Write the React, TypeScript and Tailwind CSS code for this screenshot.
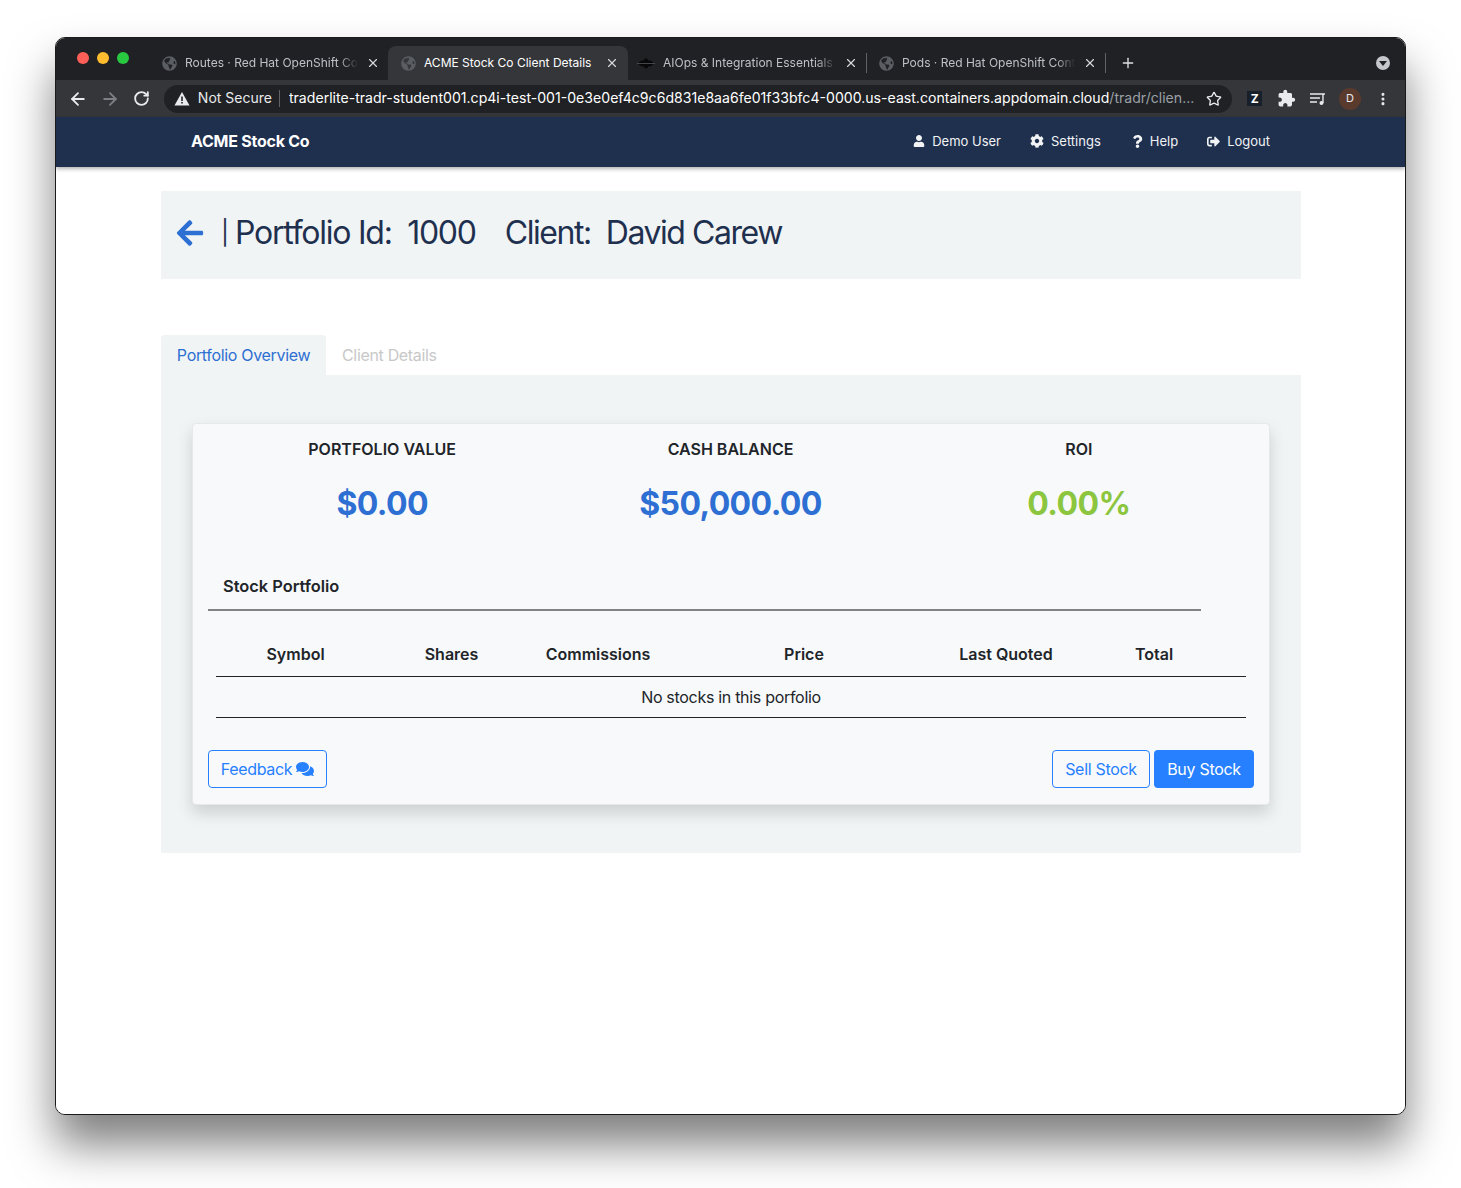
import { ArrowLeft, ArrowRight, MoreVertical, Plus, RotateCw, Star, X } from 'lucide-react';
import { FaArrowLeft, FaCog, FaComments, FaGlobeAmericas, FaQuestion, FaSignOutAlt, FaUser } from 'react-icons/fa';
import { MdExtension } from 'react-icons/md';

const tabs = [
  { title: 'Routes · Red Hat OpenShift Console', active: false, box: 'w-[227px] pl-[1px] pr-[8px]', fade: true, sep: false },
  { title: 'ACME Stock Co Client Details', active: true, box: 'w-[240px] pl-[13px] pr-[9px]', fade: false, sep: false },
  { title: 'AIOps & Integration Essentials', active: false, box: 'w-[239px] pl-[9px]', fade: true, sep: true, ai: true },
  { title: 'Pods · Red Hat OpenShift Container', active: false, box: 'w-[239px] pl-[12px]', fade: true, sep: true },
];

const columns = [
  { label: 'Symbol', width: 'w-[159px]' },
  { label: 'Shares', width: 'w-[153px]' },
  { label: 'Commissions', width: 'w-[140px]' },
  { label: 'Price', width: 'w-[272px]' },
  { label: 'Last Quoted', width: 'w-[132px]' },
  { label: 'Total', width: 'w-[164px]' },
];

const stats = [
  { label: 'PORTFOLIO VALUE', value: '$0.00', color: 'text-[#2d6fd2]' },
  { label: 'CASH BALANCE', value: '$50,000.00', color: 'text-[#2d6fd2]' },
  { label: 'ROI', value: '0.00%', color: 'text-[#8cc63f]' },
];

type TabProps = { title: string; active: boolean; box: string; fade: boolean; sep: boolean; ai?: boolean };

function Tab({ title, active, box, fade, sep, ai }: TabProps) {
  return (
    <div className={`${box} h-[34px] flex items-center rounded-t-[8px] ${active ? 'bg-[#35363a] text-white' : 'text-[#bdc1c6]'}`}>
      {ai ? (
        <svg width="18" height="12" viewBox="0 0 18 12" className="mr-[8px] shrink-0">
          <path d="M1 6.5C3 3.5 6 3 8 4v5C6 10 3 9.5 1 6.5zM17 6.5C15 3.5 12 3 10 4v5c2 1 5 .5 7-2.500z" fill="#08080a" />
          <ellipse cx="9" cy="6.5" rx="2.500" ry="5" fill="#08080a" />
          <path d="M0 6.500h18" stroke="#55575b" strokeWidth="0.8" />
        </svg>
      ) : (
        <FaGlobeAmericas className="mr-[8px] shrink-0 text-[15px] text-[#5a5d62]" />
      )}
      <span
        className={`flex-1 overflow-hidden whitespace-nowrap text-[12px] leading-[16px] ${
          fade ? '[mask-image:linear-gradient(to_right,black_88%,transparent_99%)]' : ''
        }`}
      >
        {title}
      </span>
      <X size={14} strokeWidth={2} className="ml-[6px] shrink-0 text-[#d5d7da]" />
      {sep && <span className="ml-[8px] w-px h-[20px] bg-[#5f6368] shrink-0" />}
    </div>
  );
}

export default function App() {
  return (
    <div className="w-[1461px] h-[1188px] bg-white pt-[37px] pl-[55px] font-['Inter',sans-serif] overflow-hidden">
      <div className="w-[1351px] h-[1078px] rounded-[10px] bg-white border border-[#1a1a1a] overflow-hidden shadow-[0_30px_45px_rgba(0,0,0,0.5)] flex flex-col">
        {/* tab strip */}
        <div className="h-[42px] bg-[#202124] flex items-end relative">
          <div className="flex gap-[8px] w-[105px] pl-[21px] pb-[16px]">
            <span className="w-[12px] h-[12px] rounded-full bg-[#ff5f57]" />
            <span className="w-[12px] h-[12px] rounded-full bg-[#febc2e]" />
            <span className="w-[12px] h-[12px] rounded-full bg-[#28c840]" />
          </div>
          {tabs.map((t) => (
            <Tab key={t.title} {...t} />
          ))}
          <div className="h-[34px] flex items-center pl-[14px]">
            <Plus size={16} strokeWidth={2} className="text-[#dfe1e5]" />
          </div>
          <div className="absolute right-[15px] top-[18px] w-[14px] h-[14px] rounded-full bg-[#c4c7cb] flex items-center justify-center">
            <span className="w-0 h-0 border-l-[4px] border-r-[4px] border-t-[5px] border-l-transparent border-r-transparent border-t-[#202124]" />
          </div>
        </div>

        {/* address bar */}
        <div className="h-[37px] bg-[#35363a] flex items-center pl-[12px] pr-[14px]">
          <ArrowLeft size={20} strokeWidth={2.2} className="text-[#e8eaed]" />
          <ArrowRight size={20} strokeWidth={2.2} className="ml-[12px] text-[#7c7f84]" />
          <RotateCw size={17} strokeWidth={2.6} className="ml-[13px] text-[#e8eaed]" />
          <div className="ml-[14px] w-[1071px] h-[28px] rounded-full bg-[#202124] flex items-center pl-[10px] pr-[10px]">
            <svg width="16" height="15" viewBox="0 0 16 15" className="shrink-0">
              <path d="M8 1l7.500 13.500H.5z" fill="#e8eaed" />
              <path d="M7.200 5.500h1.600v4.500H7.200zM7.200 11h1.600v1.600H7.200z" fill="#202124" />
            </svg>
            <span className="ml-[8px] pb-[2px] text-[14px] text-[#e8eaed] whitespace-nowrap">Not Secure</span>
            <span className="ml-[7px] mr-[9px] w-px h-[17px] bg-[#5f6368]" />
            <span className="flex-1 pb-[2px] whitespace-nowrap overflow-hidden text-[14.1px] text-white">
              traderlite-tradr-student001.cp4i-test-001-0e3e0ef4c9c6d831e8aa6fe01f33bfc4-0000.us-east.containers.appdomain.cloud
              <span className="text-[#9aa0a6]">/tradr/clien...</span>
            </span>
            <Star size={16} className="ml-[10px] shrink-0 text-[#e8eaed]" />
          </div>
          <div className="ml-[15px] w-[15px] h-[15px] bg-[#17202a] text-white text-[12px] font-bold flex items-center justify-center">Z</div>
          <MdExtension className="ml-[15px] text-[19px] text-[#e8eaed]" />
          <svg width="16" height="14" viewBox="0 0 16 14" className="ml-[14px] text-[#e8eaed]">
            <path d="M0 2h15M0 6h10M0 10h7" stroke="currentColor" strokeWidth="1.400" />
            <path d="M13 2v9" stroke="currentColor" strokeWidth="1.400" />
            <circle cx="11.500" cy="11" r="2" fill="currentColor" />
          </svg>
          <div className="ml-[13px] w-[22px] h-[22px] rounded-full bg-[#5b3a2e] text-[#e8eaed] text-[11px] flex items-center justify-center">D</div>
          <MoreVertical size={16} strokeWidth={2.6} className="ml-[14px] text-[#e8eaed]" />
        </div>

        {/* app navbar */}
        <nav className="h-[50px] bg-[#1f304f] flex items-center pl-[135px] pr-[135px] pb-[2px] text-white shadow-[0_2px_4px_rgba(0,0,0,0.3)] relative">
          <span className="flex-1 text-[16px] leading-[20px] font-bold tracking-[-0.25px]">ACME Stock Co</span>
          <div className="flex items-center text-[13px] leading-[20px] text-[#f1f3f5]">
            <FaUser className="text-[12px] mr-[7px]" />
            <span>Demo User</span>
            <FaCog className="text-[14px] ml-[29px] mr-[7px]" />
            <span>Settings</span>
            <FaQuestion className="text-[13px] ml-[30px] mr-[6px]" />
            <span>Help</span>
            <FaSignOutAlt className="text-[13px] ml-[29px] mr-[7px]" />
            <span>Logout</span>
          </div>
        </nav>

        {/* page */}
        <main className="flex-1 pl-[105px] pr-[104px] pt-[24px] bg-white">
          <header className="h-[88px] bg-[#f0f4f5] flex items-center pl-[14px] pb-[4px] text-[#1f304f] text-[32px] tracking-[-1.25px] whitespace-pre">
            <FaArrowLeft className="text-[30px] text-[#2d6fd2] mr-[16px]" />
            <span className="text-[24px] w-[14px]">|</span>
            <span>Portfolio Id:  1000</span>
            <span className="ml-[29px] tracking-[-1.45px]">Client:  David Carew</span>
          </header>

          <div className="mt-[56px] flex text-[16px] tracking-[-0.33px]">
            <div className="h-[40px] w-[165px] bg-[#f0f4f5] rounded-t-[4px] flex items-center justify-center text-[#2d6fd2]">Portfolio Overview</div>
            <div className="h-[40px] px-[16px] flex items-center text-[#c8c8c8]">Client Details</div>
          </div>

          <section className="bg-[#f0f4f5] h-[478px] pt-[48px] px-[31px]">
            <div className="h-[382px] bg-[#f8f9fb] rounded-[4px] border border-[#e6e8ea] shadow-[0_8px_16px_rgba(0,0,0,0.15)] pt-[16px] px-[15px] text-[#212529]">
              <div className="grid grid-cols-3 w-[1045px]">
                {stats.map((s) => (
                  <div key={s.label} className="flex flex-col items-center">
                    <span className="text-[16px] leading-[19px] font-semibold">{s.label}</span>
                    <span className={`mt-[21px] text-[32px] leading-[48px] font-bold tracking-[-0.6px] ${s.color}`}>{s.value}</span>
                  </div>
                ))}
              </div>

              <div className="mt-[36px] w-[993px] h-[47px] border-b-2 border-[#808285] pl-[15px] pt-[10px] text-[16.4px] font-semibold">Stock Portfolio</div>

              <div className="mt-[23px] ml-[8px] w-[1030px]">
                <div className="flex h-[43px] border-b border-[#212529] font-semibold text-[16px] pt-[8px] text-center">
                  {columns.map((c) => (
                    <span key={c.label} className={c.width}>{c.label}</span>
                  ))}
                </div>
                <div className="h-[41px] border-b border-[#212529] flex items-center justify-center text-[16px] tracking-[-0.3px]">No stocks in this porfolio</div>
              </div>

              <div className="mt-[32px] flex items-center justify-between w-[1046px] text-[16px] tracking-[-0.3px]">
                <button className="h-[38px] w-[119px] rounded-[4px] border border-[#2680ff] text-[#2680ff] flex items-center justify-center gap-[4px]">
                  Feedback <FaComments className="text-[18px]" />
                </button>
                <div className="flex gap-[4px]">
                  <button className="h-[38px] w-[98px] rounded-[4px] border border-[#2680ff] text-[#2680ff]">Sell Stock</button>
                  <button className="h-[38px] w-[100px] rounded-[4px] bg-[#2680ff] text-white">Buy Stock</button>
                </div>
              </div>
            </div>
          </section>
        </main>
      </div>
    </div>
  );
}
